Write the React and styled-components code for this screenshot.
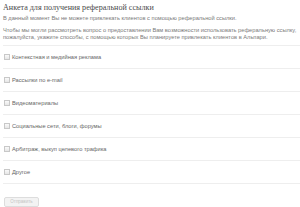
import React from 'react';
import styled, { createGlobalStyle } from 'styled-components';

const GlobalStyle = createGlobalStyle`
  html, body {
    margin: 0;
    padding: 0;
    background: #fff;
  }
`;

const options = [
  'Контекстная и медийная реклама',
  'Рассылки по e-mail',
  'Видеоматериалы',
  'Социальные сети, блоги, форумы',
  'Арбитраж, выкуп целевого трафика',
  'Другое',
];

const App = () => {
  return (
    <>
      <GlobalStyle />
      <Form>
        <Title>Анкета для получения реферальной ссылки</Title>
        <Notice>В данный момент Вы не можете привлекать клиентов с помощью реферальной ссылки.</Notice>
        <Text>
          <Line>Чтобы мы могли рассмотреть вопрос о предоставлении Вам возможности использовать реферальную ссылку,</Line>
          <Line>пожалуйста, укажите способы, с помощью которых Вы планируете привлекать клиентов в Альпари.</Line>
        </Text>
        <List>
          {options.map((label) => (
            <Row key={label}>
              <Box />
              <Label>{label}</Label>
            </Row>
          ))}
        </List>
        <Submit>Отправить</Submit>
      </Form>
    </>
  );
};

const Form = styled.div`
  padding: 3px 0 0 3px;
  font-family: 'Liberation Sans', Arial, sans-serif;
  color: #7a7a7a;
`;

const Title = styled.div`
  font-family: 'Liberation Serif', 'Times New Roman', serif;
  font-size: 8.1px;
  line-height: 9px;
  color: #4a4a4a;
  height: 9px;
`;

const Notice = styled.div`
  margin-top: 3px;
  font-size: 5.7px;
  line-height: 7px;
`;

const Text = styled.div`
  margin-top: 5px;
  font-size: 5.7px;
  line-height: 7px;
  padding-bottom: 4px;
  border-bottom: 1px solid #eee;
`;

const Line = styled.div`
  white-space: nowrap;
`;

const List = styled.div`
  display: flex;
  flex-direction: column;
`;

const Row = styled.div`
  display: flex;
  align-items: center;
  gap: 2px;
  height: 22px;
  padding-left: 1px;
  border-bottom: 1px solid #eee;
`;

const Box = styled.span`
  width: 6px;
  height: 6px;
  border: 1px solid #c8c8c8;
  background: linear-gradient(#fafafa, #e6e6e6);
  box-sizing: border-box;
`;

const Label = styled.span`
  font-size: 5.7px;
  color: #666;
`;

const Submit = styled.div`
  margin: 13px 0 0 1px;
  width: 33px;
  height: 8px;
  border: 1px solid #ddd;
  border-radius: 2px;
  background: #f3f3f3;
  color: #c4c4c4;
  font-size: 4.5px;
  line-height: 8px;
  text-align: center;
`;

export default App;
